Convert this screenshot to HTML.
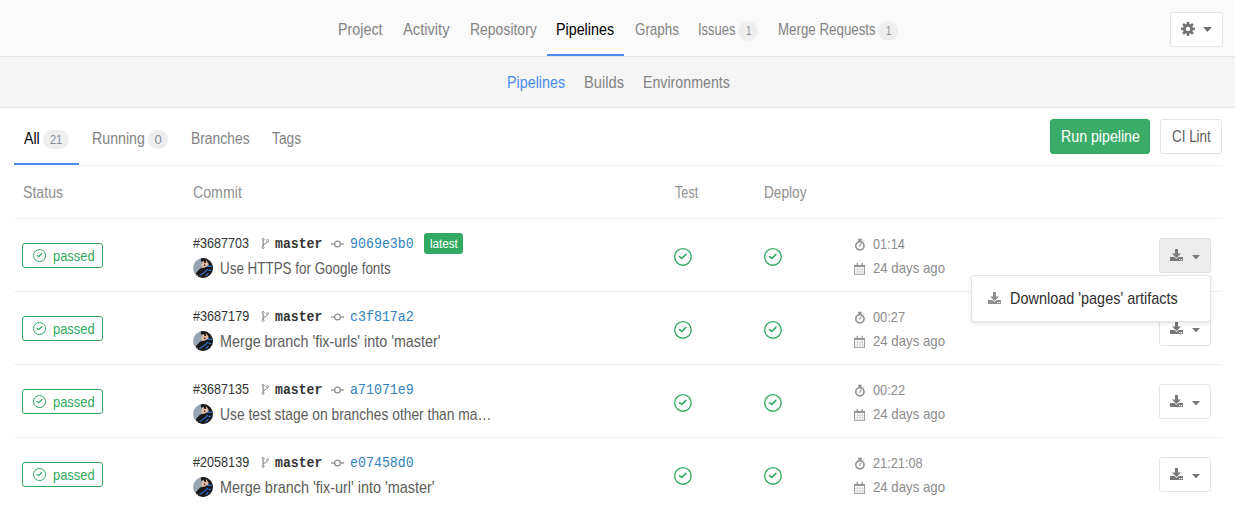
<!DOCTYPE html>
<html><head><meta charset="utf-8"><title>Pipelines</title>
<style>
html,body{margin:0;padding:0;background:#fff;}
body{width:1235px;height:509px;overflow:hidden;position:relative;font-family:"Liberation Sans",sans-serif;}
</style></head><body>
<div style="position:absolute;left:0px;top:0px;width:1235px;height:56px;background:#fafafa"></div>
<div style="position:absolute;left:0px;top:56px;width:1235px;height:1px;background:#e5e5e5"></div>
<div style="position:absolute;left:547px;top:54px;width:77px;height:2px;background:#4a8bee"></div>
<div style="position:absolute;left:738px;top:21px;width:20px;height:20px;background:#eeeeee;border-radius:10px"></div>
<div style="position:absolute;left:878px;top:21px;width:20px;height:20px;background:#eeeeee;border-radius:10px"></div>
<div style="position:absolute;left:1170px;top:12px;width:53px;height:35px;background:#fff;border:1px solid #e5e5e5;border-radius:3px;box-sizing:border-box"></div>
<div style="position:absolute;left:0px;top:57px;width:1235px;height:50px;background:#f5f5f5"></div>
<div style="position:absolute;left:0px;top:107px;width:1235px;height:1px;background:#e5e5e5"></div>
<div style="position:absolute;left:43px;top:130px;width:26px;height:19px;background:#eeeeee;border-radius:10px"></div>
<div style="position:absolute;left:148px;top:130px;width:20px;height:19px;background:#eeeeee;border-radius:10px"></div>
<div style="position:absolute;left:14px;top:163px;width:65px;height:2px;background:#4a8bee"></div>
<div style="position:absolute;left:79px;top:165px;width:1143px;height:1px;background:#f0f0f0"></div>
<div style="position:absolute;left:1050px;top:119px;width:100px;height:35px;background:#3bac68;border:1px solid #2faa60;border-radius:3px;box-sizing:border-box"></div>
<div style="position:absolute;left:1160px;top:119px;width:62px;height:35px;background:#fff;border:1px solid #e5e5e5;border-radius:3px;box-sizing:border-box"></div>
<div style="position:absolute;left:14px;top:218px;width:1208px;height:1px;background:#f0f0f0"></div>
<div style="position:absolute;left:22px;top:243px;width:81px;height:25px;border:1px solid #2faa60;border-radius:3px;box-sizing:border-box;background:#fff"></div>
<svg style="position:absolute;left:30.95px;top:246.85px" width="17.1" height="17.1" viewBox="-8.55 -8.55 17.1 17.1"><circle cx="0" cy="0" r="6.05" fill="none" stroke="#2faa60" stroke-width="1.0"/><path d="M-2.49 -0.13 L-0.79 1.05 L2.16 -1.83" fill="none" stroke="#2faa60" stroke-width="1.25" stroke-linecap="round" stroke-linejoin="round"/></svg>
<svg style="position:absolute;left:256px;top:234px" width="16" height="18" viewBox="256 234 16 18"><g fill="none" stroke="#858585" stroke-width="0.9"><circle cx="263.1" cy="239.4" r="1.05"/><circle cx="263.1" cy="247.4" r="1.05"/><circle cx="267.5" cy="240.6" r="1.05"/><path d="M263.1 240.4 V246.4" stroke-width="1.15"/><path d="M267.5 241.6 Q267.3 243.6 263.3 244.6" stroke-width="1"/></g></svg>
<svg style="position:absolute;left:330px;top:239px" width="15" height="10" viewBox="0 0 15 10"><path d="M1 5 H14" stroke="#8f8f8f" stroke-width="1.3"/><circle cx="7.5" cy="5" r="2.9" fill="#fff" stroke="#8f8f8f" stroke-width="1.3"/></svg>
<div style="position:absolute;left:424px;top:233px;width:39px;height:21px;background:#33aa62;border-radius:3px"></div>
<svg style="position:absolute;left:193px;top:257.9px" width="20" height="20" viewBox="0 0 20 20"><defs><clipPath id="av0"><circle cx="10" cy="10" r="9.95"/></clipPath></defs><g clip-path="url(#av0)"><rect width="20" height="20" fill="#97a4b2"/><path d="M7.6 0 L20 0 L20 9 L16 8 L14 4 L10 3 L8.2 4 Z" fill="#1d1a19"/><path d="M9.4 4 L13.5 2.6 L15.6 6 L14.6 9.2 L10 10.2 L8.2 8 Z" fill="#e3bca2"/><path d="M10.8 3 L12.6 2.4 L13.4 4.6 L11.6 5.2 Z" fill="#1d1a19"/><circle cx="11.6" cy="7.2" r="0.8" fill="#1d1a19"/><path d="M3 15 L7.2 10.6 L12 9.6 L15.6 7.6 L20 7.6 L20 20 L3 20 Z" fill="#1b1818"/><path d="M6.8 17.4 L11.4 14.4 L14.6 11.4 M14.2 8.4 L18.8 8.2 M13 17.6 L15.2 15.4 M16 12.4 L17.6 12.2" fill="none" stroke="#2f7ee6" stroke-width="1.1" stroke-linecap="round"/><path d="M3.2 16.4 L4.6 17.8" stroke="#e8b9a0" stroke-width="1"/></g></svg>
<svg style="position:absolute;left:671.8px;top:245.55px" width="21.9" height="21.9" viewBox="-10.95 -10.95 21.9 21.9"><circle cx="0" cy="0" r="8.274999999999999" fill="none" stroke="#2faa60" stroke-width="1.35"/><path d="M-3.40 -0.18 L-1.07 1.43 L2.95 -2.51" fill="none" stroke="#2faa60" stroke-width="1.6" stroke-linecap="round" stroke-linejoin="round"/></svg>
<svg style="position:absolute;left:761.8px;top:245.55px" width="21.9" height="21.9" viewBox="-10.95 -10.95 21.9 21.9"><circle cx="0" cy="0" r="8.274999999999999" fill="none" stroke="#2faa60" stroke-width="1.35"/><path d="M-3.40 -0.18 L-1.07 1.43 L2.95 -2.51" fill="none" stroke="#2faa60" stroke-width="1.6" stroke-linecap="round" stroke-linejoin="round"/></svg>
<svg style="position:absolute;left:850px;top:235px" width="20" height="20" viewBox="850 235 20 20"><path d="M858 238.7 H861.9 L861.3 241.2 H858.6 Z" fill="#8f8f8f"/><circle cx="859.9" cy="245.8" r="4.1" fill="none" stroke="#8f8f8f" stroke-width="1.6"/><path d="M859.6 246.3 L861.2 243.8" stroke="#8f8f8f" stroke-width="1.1" stroke-linecap="round"/><path d="M862.9 241.5 L863.9 240.5" stroke="#8f8f8f" stroke-width="0.9"/></svg>
<svg style="position:absolute;left:850px;top:260px" width="20" height="20" viewBox="850 260 20 20"><rect x="854.4" y="265.4" width="10.2" height="8.9" fill="none" stroke="#8f8f8f" stroke-width="0.85"/><rect x="854.2" y="265" width="10.6" height="1.9" fill="#8f8f8f"/><path d="M857.3 267 V274.3 M859.9 267 V274.3 M862.4 267 V274.3 M854.5 269.3 H864.5 M854.5 271.8 H864.5" stroke="#8f8f8f" stroke-width="0.5" opacity="0.6"/><rect x="856.6" y="262.8" width="1.4" height="2.6" fill="#8f8f8f" opacity="0.85"/><rect x="861.5" y="262.8" width="1.4" height="2.6" fill="#8f8f8f" opacity="0.85"/></svg>
<div style="position:absolute;left:1159px;top:238px;width:52px;height:35px;background:#ececec;border:1px solid #dcdfe3;border-radius:3px;box-sizing:border-box"></div>
<svg style="position:absolute;left:1170px;top:249px" width="13" height="12" viewBox="0 0 13 12"><rect x="5" y="0" width="3" height="6" fill="#787878"/><path d="M2 4.5 L11 4.5 L6.5 9 Z" fill="#787878"/><path d="M0 8 L4.5 8 L6.5 10 L8.5 8 L13 8 L13 12 L0 12 Z" fill="#787878"/><rect x="9" y="10" width="1.2" height="1.2" fill="#fff"/><rect x="11" y="10" width="1.2" height="1.2" fill="#fff"/></svg>
<svg style="position:absolute;left:1192.0px;top:254.75px" width="8" height="4.5" viewBox="0 0 8 4.5"><path d="M0 0 L8 0 L4.0 4.5 Z" fill="#787878"/></svg>
<div style="position:absolute;left:14px;top:291px;width:1208px;height:1px;background:#f0f0f0"></div>
<div style="position:absolute;left:22px;top:316px;width:81px;height:25px;border:1px solid #2faa60;border-radius:3px;box-sizing:border-box;background:#fff"></div>
<svg style="position:absolute;left:30.95px;top:319.84999999999997px" width="17.1" height="17.1" viewBox="-8.55 -8.55 17.1 17.1"><circle cx="0" cy="0" r="6.05" fill="none" stroke="#2faa60" stroke-width="1.0"/><path d="M-2.49 -0.13 L-0.79 1.05 L2.16 -1.83" fill="none" stroke="#2faa60" stroke-width="1.25" stroke-linecap="round" stroke-linejoin="round"/></svg>
<svg style="position:absolute;left:256px;top:307px" width="16" height="18" viewBox="256 234 16 18"><g fill="none" stroke="#858585" stroke-width="0.9"><circle cx="263.1" cy="239.4" r="1.05"/><circle cx="263.1" cy="247.4" r="1.05"/><circle cx="267.5" cy="240.6" r="1.05"/><path d="M263.1 240.4 V246.4" stroke-width="1.15"/><path d="M267.5 241.6 Q267.3 243.6 263.3 244.6" stroke-width="1"/></g></svg>
<svg style="position:absolute;left:330px;top:312px" width="15" height="10" viewBox="0 0 15 10"><path d="M1 5 H14" stroke="#8f8f8f" stroke-width="1.3"/><circle cx="7.5" cy="5" r="2.9" fill="#fff" stroke="#8f8f8f" stroke-width="1.3"/></svg>
<svg style="position:absolute;left:193px;top:330.9px" width="20" height="20" viewBox="0 0 20 20"><defs><clipPath id="av1"><circle cx="10" cy="10" r="9.95"/></clipPath></defs><g clip-path="url(#av1)"><rect width="20" height="20" fill="#97a4b2"/><path d="M7.6 0 L20 0 L20 9 L16 8 L14 4 L10 3 L8.2 4 Z" fill="#1d1a19"/><path d="M9.4 4 L13.5 2.6 L15.6 6 L14.6 9.2 L10 10.2 L8.2 8 Z" fill="#e3bca2"/><path d="M10.8 3 L12.6 2.4 L13.4 4.6 L11.6 5.2 Z" fill="#1d1a19"/><circle cx="11.6" cy="7.2" r="0.8" fill="#1d1a19"/><path d="M3 15 L7.2 10.6 L12 9.6 L15.6 7.6 L20 7.6 L20 20 L3 20 Z" fill="#1b1818"/><path d="M6.8 17.4 L11.4 14.4 L14.6 11.4 M14.2 8.4 L18.8 8.2 M13 17.6 L15.2 15.4 M16 12.4 L17.6 12.2" fill="none" stroke="#2f7ee6" stroke-width="1.1" stroke-linecap="round"/><path d="M3.2 16.4 L4.6 17.8" stroke="#e8b9a0" stroke-width="1"/></g></svg>
<svg style="position:absolute;left:671.8px;top:318.55px" width="21.9" height="21.9" viewBox="-10.95 -10.95 21.9 21.9"><circle cx="0" cy="0" r="8.274999999999999" fill="none" stroke="#2faa60" stroke-width="1.35"/><path d="M-3.40 -0.18 L-1.07 1.43 L2.95 -2.51" fill="none" stroke="#2faa60" stroke-width="1.6" stroke-linecap="round" stroke-linejoin="round"/></svg>
<svg style="position:absolute;left:761.8px;top:318.55px" width="21.9" height="21.9" viewBox="-10.95 -10.95 21.9 21.9"><circle cx="0" cy="0" r="8.274999999999999" fill="none" stroke="#2faa60" stroke-width="1.35"/><path d="M-3.40 -0.18 L-1.07 1.43 L2.95 -2.51" fill="none" stroke="#2faa60" stroke-width="1.6" stroke-linecap="round" stroke-linejoin="round"/></svg>
<svg style="position:absolute;left:850px;top:308px" width="20" height="20" viewBox="850 235 20 20"><path d="M858 238.7 H861.9 L861.3 241.2 H858.6 Z" fill="#8f8f8f"/><circle cx="859.9" cy="245.8" r="4.1" fill="none" stroke="#8f8f8f" stroke-width="1.6"/><path d="M859.6 246.3 L861.2 243.8" stroke="#8f8f8f" stroke-width="1.1" stroke-linecap="round"/><path d="M862.9 241.5 L863.9 240.5" stroke="#8f8f8f" stroke-width="0.9"/></svg>
<svg style="position:absolute;left:850px;top:333px" width="20" height="20" viewBox="850 260 20 20"><rect x="854.4" y="265.4" width="10.2" height="8.9" fill="none" stroke="#8f8f8f" stroke-width="0.85"/><rect x="854.2" y="265" width="10.6" height="1.9" fill="#8f8f8f"/><path d="M857.3 267 V274.3 M859.9 267 V274.3 M862.4 267 V274.3 M854.5 269.3 H864.5 M854.5 271.8 H864.5" stroke="#8f8f8f" stroke-width="0.5" opacity="0.6"/><rect x="856.6" y="262.8" width="1.4" height="2.6" fill="#8f8f8f" opacity="0.85"/><rect x="861.5" y="262.8" width="1.4" height="2.6" fill="#8f8f8f" opacity="0.85"/></svg>
<div style="position:absolute;left:1159px;top:311px;width:52px;height:35px;background:#fff;border:1px solid #e5e5e5;border-radius:3px;box-sizing:border-box"></div>
<svg style="position:absolute;left:1170px;top:322px" width="13" height="12" viewBox="0 0 13 12"><rect x="5" y="0" width="3" height="6" fill="#787878"/><path d="M2 4.5 L11 4.5 L6.5 9 Z" fill="#787878"/><path d="M0 8 L4.5 8 L6.5 10 L8.5 8 L13 8 L13 12 L0 12 Z" fill="#787878"/><rect x="9" y="10" width="1.2" height="1.2" fill="#fff"/><rect x="11" y="10" width="1.2" height="1.2" fill="#fff"/></svg>
<svg style="position:absolute;left:1192.0px;top:327.75px" width="8" height="4.5" viewBox="0 0 8 4.5"><path d="M0 0 L8 0 L4.0 4.5 Z" fill="#787878"/></svg>
<div style="position:absolute;left:14px;top:364px;width:1208px;height:1px;background:#f0f0f0"></div>
<div style="position:absolute;left:22px;top:389px;width:81px;height:25px;border:1px solid #2faa60;border-radius:3px;box-sizing:border-box;background:#fff"></div>
<svg style="position:absolute;left:30.95px;top:392.84999999999997px" width="17.1" height="17.1" viewBox="-8.55 -8.55 17.1 17.1"><circle cx="0" cy="0" r="6.05" fill="none" stroke="#2faa60" stroke-width="1.0"/><path d="M-2.49 -0.13 L-0.79 1.05 L2.16 -1.83" fill="none" stroke="#2faa60" stroke-width="1.25" stroke-linecap="round" stroke-linejoin="round"/></svg>
<svg style="position:absolute;left:256px;top:380px" width="16" height="18" viewBox="256 234 16 18"><g fill="none" stroke="#858585" stroke-width="0.9"><circle cx="263.1" cy="239.4" r="1.05"/><circle cx="263.1" cy="247.4" r="1.05"/><circle cx="267.5" cy="240.6" r="1.05"/><path d="M263.1 240.4 V246.4" stroke-width="1.15"/><path d="M267.5 241.6 Q267.3 243.6 263.3 244.6" stroke-width="1"/></g></svg>
<svg style="position:absolute;left:330px;top:385px" width="15" height="10" viewBox="0 0 15 10"><path d="M1 5 H14" stroke="#8f8f8f" stroke-width="1.3"/><circle cx="7.5" cy="5" r="2.9" fill="#fff" stroke="#8f8f8f" stroke-width="1.3"/></svg>
<svg style="position:absolute;left:193px;top:403.9px" width="20" height="20" viewBox="0 0 20 20"><defs><clipPath id="av2"><circle cx="10" cy="10" r="9.95"/></clipPath></defs><g clip-path="url(#av2)"><rect width="20" height="20" fill="#97a4b2"/><path d="M7.6 0 L20 0 L20 9 L16 8 L14 4 L10 3 L8.2 4 Z" fill="#1d1a19"/><path d="M9.4 4 L13.5 2.6 L15.6 6 L14.6 9.2 L10 10.2 L8.2 8 Z" fill="#e3bca2"/><path d="M10.8 3 L12.6 2.4 L13.4 4.6 L11.6 5.2 Z" fill="#1d1a19"/><circle cx="11.6" cy="7.2" r="0.8" fill="#1d1a19"/><path d="M3 15 L7.2 10.6 L12 9.6 L15.6 7.6 L20 7.6 L20 20 L3 20 Z" fill="#1b1818"/><path d="M6.8 17.4 L11.4 14.4 L14.6 11.4 M14.2 8.4 L18.8 8.2 M13 17.6 L15.2 15.4 M16 12.4 L17.6 12.2" fill="none" stroke="#2f7ee6" stroke-width="1.1" stroke-linecap="round"/><path d="M3.2 16.4 L4.6 17.8" stroke="#e8b9a0" stroke-width="1"/></g></svg>
<svg style="position:absolute;left:671.8px;top:391.55px" width="21.9" height="21.9" viewBox="-10.95 -10.95 21.9 21.9"><circle cx="0" cy="0" r="8.274999999999999" fill="none" stroke="#2faa60" stroke-width="1.35"/><path d="M-3.40 -0.18 L-1.07 1.43 L2.95 -2.51" fill="none" stroke="#2faa60" stroke-width="1.6" stroke-linecap="round" stroke-linejoin="round"/></svg>
<svg style="position:absolute;left:761.8px;top:391.55px" width="21.9" height="21.9" viewBox="-10.95 -10.95 21.9 21.9"><circle cx="0" cy="0" r="8.274999999999999" fill="none" stroke="#2faa60" stroke-width="1.35"/><path d="M-3.40 -0.18 L-1.07 1.43 L2.95 -2.51" fill="none" stroke="#2faa60" stroke-width="1.6" stroke-linecap="round" stroke-linejoin="round"/></svg>
<svg style="position:absolute;left:850px;top:381px" width="20" height="20" viewBox="850 235 20 20"><path d="M858 238.7 H861.9 L861.3 241.2 H858.6 Z" fill="#8f8f8f"/><circle cx="859.9" cy="245.8" r="4.1" fill="none" stroke="#8f8f8f" stroke-width="1.6"/><path d="M859.6 246.3 L861.2 243.8" stroke="#8f8f8f" stroke-width="1.1" stroke-linecap="round"/><path d="M862.9 241.5 L863.9 240.5" stroke="#8f8f8f" stroke-width="0.9"/></svg>
<svg style="position:absolute;left:850px;top:406px" width="20" height="20" viewBox="850 260 20 20"><rect x="854.4" y="265.4" width="10.2" height="8.9" fill="none" stroke="#8f8f8f" stroke-width="0.85"/><rect x="854.2" y="265" width="10.6" height="1.9" fill="#8f8f8f"/><path d="M857.3 267 V274.3 M859.9 267 V274.3 M862.4 267 V274.3 M854.5 269.3 H864.5 M854.5 271.8 H864.5" stroke="#8f8f8f" stroke-width="0.5" opacity="0.6"/><rect x="856.6" y="262.8" width="1.4" height="2.6" fill="#8f8f8f" opacity="0.85"/><rect x="861.5" y="262.8" width="1.4" height="2.6" fill="#8f8f8f" opacity="0.85"/></svg>
<div style="position:absolute;left:1159px;top:384px;width:52px;height:35px;background:#fff;border:1px solid #e5e5e5;border-radius:3px;box-sizing:border-box"></div>
<svg style="position:absolute;left:1170px;top:395px" width="13" height="12" viewBox="0 0 13 12"><rect x="5" y="0" width="3" height="6" fill="#787878"/><path d="M2 4.5 L11 4.5 L6.5 9 Z" fill="#787878"/><path d="M0 8 L4.5 8 L6.5 10 L8.5 8 L13 8 L13 12 L0 12 Z" fill="#787878"/><rect x="9" y="10" width="1.2" height="1.2" fill="#fff"/><rect x="11" y="10" width="1.2" height="1.2" fill="#fff"/></svg>
<svg style="position:absolute;left:1192.0px;top:400.75px" width="8" height="4.5" viewBox="0 0 8 4.5"><path d="M0 0 L8 0 L4.0 4.5 Z" fill="#787878"/></svg>
<div style="position:absolute;left:14px;top:437px;width:1208px;height:1px;background:#f0f0f0"></div>
<div style="position:absolute;left:22px;top:462px;width:81px;height:25px;border:1px solid #2faa60;border-radius:3px;box-sizing:border-box;background:#fff"></div>
<svg style="position:absolute;left:30.95px;top:465.84999999999997px" width="17.1" height="17.1" viewBox="-8.55 -8.55 17.1 17.1"><circle cx="0" cy="0" r="6.05" fill="none" stroke="#2faa60" stroke-width="1.0"/><path d="M-2.49 -0.13 L-0.79 1.05 L2.16 -1.83" fill="none" stroke="#2faa60" stroke-width="1.25" stroke-linecap="round" stroke-linejoin="round"/></svg>
<svg style="position:absolute;left:256px;top:453px" width="16" height="18" viewBox="256 234 16 18"><g fill="none" stroke="#858585" stroke-width="0.9"><circle cx="263.1" cy="239.4" r="1.05"/><circle cx="263.1" cy="247.4" r="1.05"/><circle cx="267.5" cy="240.6" r="1.05"/><path d="M263.1 240.4 V246.4" stroke-width="1.15"/><path d="M267.5 241.6 Q267.3 243.6 263.3 244.6" stroke-width="1"/></g></svg>
<svg style="position:absolute;left:330px;top:458px" width="15" height="10" viewBox="0 0 15 10"><path d="M1 5 H14" stroke="#8f8f8f" stroke-width="1.3"/><circle cx="7.5" cy="5" r="2.9" fill="#fff" stroke="#8f8f8f" stroke-width="1.3"/></svg>
<svg style="position:absolute;left:193px;top:476.9px" width="20" height="20" viewBox="0 0 20 20"><defs><clipPath id="av3"><circle cx="10" cy="10" r="9.95"/></clipPath></defs><g clip-path="url(#av3)"><rect width="20" height="20" fill="#97a4b2"/><path d="M7.6 0 L20 0 L20 9 L16 8 L14 4 L10 3 L8.2 4 Z" fill="#1d1a19"/><path d="M9.4 4 L13.5 2.6 L15.6 6 L14.6 9.2 L10 10.2 L8.2 8 Z" fill="#e3bca2"/><path d="M10.8 3 L12.6 2.4 L13.4 4.6 L11.6 5.2 Z" fill="#1d1a19"/><circle cx="11.6" cy="7.2" r="0.8" fill="#1d1a19"/><path d="M3 15 L7.2 10.6 L12 9.6 L15.6 7.6 L20 7.6 L20 20 L3 20 Z" fill="#1b1818"/><path d="M6.8 17.4 L11.4 14.4 L14.6 11.4 M14.2 8.4 L18.8 8.2 M13 17.6 L15.2 15.4 M16 12.4 L17.6 12.2" fill="none" stroke="#2f7ee6" stroke-width="1.1" stroke-linecap="round"/><path d="M3.2 16.4 L4.6 17.8" stroke="#e8b9a0" stroke-width="1"/></g></svg>
<svg style="position:absolute;left:671.8px;top:464.55px" width="21.9" height="21.9" viewBox="-10.95 -10.95 21.9 21.9"><circle cx="0" cy="0" r="8.274999999999999" fill="none" stroke="#2faa60" stroke-width="1.35"/><path d="M-3.40 -0.18 L-1.07 1.43 L2.95 -2.51" fill="none" stroke="#2faa60" stroke-width="1.6" stroke-linecap="round" stroke-linejoin="round"/></svg>
<svg style="position:absolute;left:761.8px;top:464.55px" width="21.9" height="21.9" viewBox="-10.95 -10.95 21.9 21.9"><circle cx="0" cy="0" r="8.274999999999999" fill="none" stroke="#2faa60" stroke-width="1.35"/><path d="M-3.40 -0.18 L-1.07 1.43 L2.95 -2.51" fill="none" stroke="#2faa60" stroke-width="1.6" stroke-linecap="round" stroke-linejoin="round"/></svg>
<svg style="position:absolute;left:850px;top:454px" width="20" height="20" viewBox="850 235 20 20"><path d="M858 238.7 H861.9 L861.3 241.2 H858.6 Z" fill="#8f8f8f"/><circle cx="859.9" cy="245.8" r="4.1" fill="none" stroke="#8f8f8f" stroke-width="1.6"/><path d="M859.6 246.3 L861.2 243.8" stroke="#8f8f8f" stroke-width="1.1" stroke-linecap="round"/><path d="M862.9 241.5 L863.9 240.5" stroke="#8f8f8f" stroke-width="0.9"/></svg>
<svg style="position:absolute;left:850px;top:479px" width="20" height="20" viewBox="850 260 20 20"><rect x="854.4" y="265.4" width="10.2" height="8.9" fill="none" stroke="#8f8f8f" stroke-width="0.85"/><rect x="854.2" y="265" width="10.6" height="1.9" fill="#8f8f8f"/><path d="M857.3 267 V274.3 M859.9 267 V274.3 M862.4 267 V274.3 M854.5 269.3 H864.5 M854.5 271.8 H864.5" stroke="#8f8f8f" stroke-width="0.5" opacity="0.6"/><rect x="856.6" y="262.8" width="1.4" height="2.6" fill="#8f8f8f" opacity="0.85"/><rect x="861.5" y="262.8" width="1.4" height="2.6" fill="#8f8f8f" opacity="0.85"/></svg>
<div style="position:absolute;left:1159px;top:457px;width:52px;height:35px;background:#fff;border:1px solid #e5e5e5;border-radius:3px;box-sizing:border-box"></div>
<svg style="position:absolute;left:1170px;top:468px" width="13" height="12" viewBox="0 0 13 12"><rect x="5" y="0" width="3" height="6" fill="#787878"/><path d="M2 4.5 L11 4.5 L6.5 9 Z" fill="#787878"/><path d="M0 8 L4.5 8 L6.5 10 L8.5 8 L13 8 L13 12 L0 12 Z" fill="#787878"/><rect x="9" y="10" width="1.2" height="1.2" fill="#fff"/><rect x="11" y="10" width="1.2" height="1.2" fill="#fff"/></svg>
<svg style="position:absolute;left:1192.0px;top:473.75px" width="8" height="4.5" viewBox="0 0 8 4.5"><path d="M0 0 L8 0 L4.0 4.5 Z" fill="#787878"/></svg>
<svg style="position:absolute;left:1178px;top:19px" width="20" height="20" viewBox="-10 -9.9 20 20"><g fill="#747474"><rect x="-1.3" y="-7" width="2.6" height="3.2" transform="rotate(0)"/><rect x="-1.3" y="-7" width="2.6" height="3.2" transform="rotate(45)"/><rect x="-1.3" y="-7" width="2.6" height="3.2" transform="rotate(90)"/><rect x="-1.3" y="-7" width="2.6" height="3.2" transform="rotate(135)"/><rect x="-1.3" y="-7" width="2.6" height="3.2" transform="rotate(180)"/><rect x="-1.3" y="-7" width="2.6" height="3.2" transform="rotate(225)"/><rect x="-1.3" y="-7" width="2.6" height="3.2" transform="rotate(270)"/><rect x="-1.3" y="-7" width="2.6" height="3.2" transform="rotate(315)"/><circle r="5.1"/></g><circle r="2.2" fill="#fff"/></svg>
<svg style="position:absolute;left:1203.0px;top:27.0px" width="9" height="5" viewBox="0 0 9 5"><path d="M0 0 L9 0 L4.5 5 Z" fill="#6f6f6f"/></svg>
<div style="position:absolute;left:971px;top:275px;width:240px;height:47px;box-sizing:border-box;background:#fff;border:1px solid #e5e5e5;border-radius:3px;box-shadow:0 2px 4px rgba(0,0,0,0.1);z-index:5"></div>
<svg style="position:absolute;z-index:6;left:988px;top:292px" width="13" height="12" viewBox="0 0 13 12"><rect x="5" y="0" width="3" height="6" fill="#8f8f8f"/><path d="M2 4.5 L11 4.5 L6.5 9 Z" fill="#8f8f8f"/><path d="M0 8 L4.5 8 L6.5 10 L8.5 8 L13 8 L13 12 L0 12 Z" fill="#8f8f8f"/><rect x="9" y="10" width="1.2" height="1.2" fill="#fff"/><rect x="11" y="10" width="1.2" height="1.2" fill="#fff"/></svg>
<span style="position:absolute;left:337.65px;top:20.00px;font-family:'Liberation Sans',sans-serif;font-weight:normal;font-size:15px;line-height:20px;transform:scale(0.9545,1.06);transform-origin:0 15px;color:#838383;white-space:pre;z-index:1">Project</span>
<span style="position:absolute;left:403.00px;top:20.00px;font-family:'Liberation Sans',sans-serif;font-weight:normal;font-size:15px;line-height:20px;transform:scale(0.9791,1.06);transform-origin:0 15px;color:#838383;white-space:pre;z-index:1">Activity</span>
<span style="position:absolute;left:469.57px;top:20.00px;font-family:'Liberation Sans',sans-serif;font-weight:normal;font-size:15px;line-height:20px;transform:scale(0.9312,1.06);transform-origin:0 15px;color:#838383;white-space:pre;z-index:1">Repository</span>
<span style="position:absolute;left:556.45px;top:20.00px;font-family:'Liberation Sans',sans-serif;font-weight:normal;font-size:15px;line-height:20px;transform:scale(0.9533,1.06);transform-origin:0 15px;color:#000;white-space:pre;z-index:1">Pipelines</span>
<span style="position:absolute;left:634.60px;top:20.00px;font-family:'Liberation Sans',sans-serif;font-weight:normal;font-size:15px;line-height:20px;transform:scale(0.8914,1.06);transform-origin:0 15px;color:#838383;white-space:pre;z-index:1">Graphs</span>
<span style="position:absolute;left:697.83px;top:20.00px;font-family:'Liberation Sans',sans-serif;font-weight:normal;font-size:15px;line-height:20px;transform:scale(0.8673,1.06);transform-origin:0 15px;color:#838383;white-space:pre;z-index:1">Issues</span>
<span style="position:absolute;left:745.70px;top:21.00px;font-family:'Liberation Sans',sans-serif;font-weight:normal;font-size:13px;line-height:20px;transform:scale(0.7429,1.0);transform-origin:0 14px;color:#8c8c8c;white-space:pre;z-index:1">1</span>
<span style="position:absolute;left:777.71px;top:20.00px;font-family:'Liberation Sans',sans-serif;font-weight:normal;font-size:15px;line-height:20px;transform:scale(0.8880,1.06);transform-origin:0 15px;color:#838383;white-space:pre;z-index:1">Merge Requests</span>
<span style="position:absolute;left:885.70px;top:21.00px;font-family:'Liberation Sans',sans-serif;font-weight:normal;font-size:13px;line-height:20px;transform:scale(0.7429,1.0);transform-origin:0 14px;color:#8c8c8c;white-space:pre;z-index:1">1</span>
<span style="position:absolute;left:506.54px;top:73.00px;font-family:'Liberation Sans',sans-serif;font-weight:normal;font-size:15px;line-height:20px;transform:scale(0.9550,1.06);transform-origin:0 15px;color:#4a8bee;white-space:pre;z-index:1">Pipelines</span>
<span style="position:absolute;left:583.52px;top:73.00px;font-family:'Liberation Sans',sans-serif;font-weight:normal;font-size:15px;line-height:20px;transform:scale(0.9783,1.06);transform-origin:0 15px;color:#838383;white-space:pre;z-index:1">Builds</span>
<span style="position:absolute;left:642.85px;top:73.00px;font-family:'Liberation Sans',sans-serif;font-weight:normal;font-size:15px;line-height:20px;transform:scale(0.9467,1.06);transform-origin:0 15px;color:#838383;white-space:pre;z-index:1">Environments</span>
<span style="position:absolute;left:23.80px;top:129.00px;font-family:'Liberation Sans',sans-serif;font-weight:normal;font-size:15px;line-height:20px;transform:scale(0.9426,1.06);transform-origin:0 15px;color:#000;white-space:pre;z-index:1">All</span>
<span style="position:absolute;left:50.00px;top:130.00px;font-family:'Liberation Sans',sans-serif;font-weight:normal;font-size:13px;line-height:20px;transform:scale(0.8433,1.0);transform-origin:0 14px;color:#7f8b9e;white-space:pre;z-index:1">21</span>
<span style="position:absolute;left:91.65px;top:129.00px;font-family:'Liberation Sans',sans-serif;font-weight:normal;font-size:15px;line-height:20px;transform:scale(0.9462,1.06);transform-origin:0 15px;color:#838383;white-space:pre;z-index:1">Running</span>
<span style="position:absolute;left:154.50px;top:130.00px;font-family:'Liberation Sans',sans-serif;font-weight:normal;font-size:13px;line-height:20px;transform:scale(1.0000,1.0);transform-origin:0 14px;color:#7f8b9e;white-space:pre;z-index:1">0</span>
<span style="position:absolute;left:190.78px;top:129.00px;font-family:'Liberation Sans',sans-serif;font-weight:normal;font-size:15px;line-height:20px;transform:scale(0.9245,1.06);transform-origin:0 15px;color:#838383;white-space:pre;z-index:1">Branches</span>
<span style="position:absolute;left:272.40px;top:129.00px;font-family:'Liberation Sans',sans-serif;font-weight:normal;font-size:15px;line-height:20px;transform:scale(0.9171,1.06);transform-origin:0 15px;color:#838383;white-space:pre;z-index:1">Tags</span>
<span style="position:absolute;left:1060.65px;top:127.00px;font-family:'Liberation Sans',sans-serif;font-weight:normal;font-size:15px;line-height:20px;transform:scale(0.9458,1.06);transform-origin:0 15px;color:#ffffff;white-space:pre;z-index:2">Run pipeline</span>
<span style="position:absolute;left:1171.50px;top:127.00px;font-family:'Liberation Sans',sans-serif;font-weight:normal;font-size:15px;line-height:20px;transform:scale(0.8940,1.06);transform-origin:0 15px;color:#5c5c5c;white-space:pre;z-index:2">CI Lint</span>
<span style="position:absolute;left:22.55px;top:183.00px;font-family:'Liberation Sans',sans-serif;font-weight:normal;font-size:15px;line-height:20px;transform:scale(0.9435,1.06);transform-origin:0 15px;color:#909090;white-space:pre;z-index:1">Status</span>
<span style="position:absolute;left:193.20px;top:183.00px;font-family:'Liberation Sans',sans-serif;font-weight:normal;font-size:15px;line-height:20px;transform:scale(0.9448,1.06);transform-origin:0 15px;color:#909090;white-space:pre;z-index:1">Commit</span>
<span style="position:absolute;left:674.90px;top:183.00px;font-family:'Liberation Sans',sans-serif;font-weight:normal;font-size:15px;line-height:20px;transform:scale(0.8468,1.06);transform-origin:0 15px;color:#909090;white-space:pre;z-index:1">Test</span>
<span style="position:absolute;left:763.59px;top:183.00px;font-family:'Liberation Sans',sans-serif;font-weight:normal;font-size:15px;line-height:20px;transform:scale(0.9114,1.06);transform-origin:0 15px;color:#909090;white-space:pre;z-index:1">Deploy</span>
<span style="position:absolute;left:52.70px;top:246.00px;font-family:'Liberation Sans',sans-serif;font-weight:normal;font-size:15px;line-height:20px;transform:scale(0.8599,1.0);transform-origin:0 15px;color:#2faa60;white-space:pre;z-index:2">passed</span>
<span style="position:absolute;left:193.10px;top:233.00px;font-family:'Liberation Sans',sans-serif;font-weight:normal;font-size:15px;line-height:20px;transform:scale(0.8374,1.0);transform-origin:0 15px;color:#333333;white-space:pre;z-index:1">#3687703</span>
<span style="position:absolute;left:275.20px;top:234.00px;font-family:'Liberation Mono',sans-serif;font-weight:bold;font-size:14px;line-height:20px;transform:scale(0.9399,1.0);transform-origin:0 14px;color:#333333;white-space:pre;z-index:1">master</span>
<span style="position:absolute;left:349.50px;top:234.00px;font-family:'Liberation Mono',sans-serif;font-weight:normal;font-size:14px;line-height:20px;transform:scale(0.9490,1.0);transform-origin:0 14px;color:#3084bb;white-space:pre;z-index:1">9069e3b0</span>
<span style="position:absolute;left:429.70px;top:234.00px;font-family:'Liberation Sans',sans-serif;font-weight:normal;font-size:13px;line-height:20px;transform:scale(0.8964,1.0);transform-origin:0 14px;color:#ffffff;white-space:pre;z-index:2">latest</span>
<span style="position:absolute;left:219.71px;top:259.00px;font-family:'Liberation Sans',sans-serif;font-weight:normal;font-size:15px;line-height:20px;transform:scale(0.8944,1.06);transform-origin:0 15px;color:#5c5c5c;white-space:pre;z-index:1">Use HTTPS for Google fonts</span>
<span style="position:absolute;left:873.30px;top:234.00px;font-family:'Liberation Sans',sans-serif;font-weight:normal;font-size:15px;line-height:20px;transform:scale(0.8469,1.0);transform-origin:0 15px;color:#8c8c8c;white-space:pre;z-index:1">01:14</span>
<span style="position:absolute;left:872.60px;top:258.00px;font-family:'Liberation Sans',sans-serif;font-weight:normal;font-size:15px;line-height:20px;transform:scale(0.8810,1.0);transform-origin:0 15px;color:#8c8c8c;white-space:pre;z-index:1">24 days ago</span>
<span style="position:absolute;left:52.70px;top:319.00px;font-family:'Liberation Sans',sans-serif;font-weight:normal;font-size:15px;line-height:20px;transform:scale(0.8599,1.0);transform-origin:0 15px;color:#2faa60;white-space:pre;z-index:2">passed</span>
<span style="position:absolute;left:193.10px;top:306.00px;font-family:'Liberation Sans',sans-serif;font-weight:normal;font-size:15px;line-height:20px;transform:scale(0.8419,1.0);transform-origin:0 15px;color:#333333;white-space:pre;z-index:1">#3687179</span>
<span style="position:absolute;left:275.20px;top:307.00px;font-family:'Liberation Mono',sans-serif;font-weight:bold;font-size:14px;line-height:20px;transform:scale(0.9399,1.0);transform-origin:0 14px;color:#333333;white-space:pre;z-index:1">master</span>
<span style="position:absolute;left:349.50px;top:307.00px;font-family:'Liberation Mono',sans-serif;font-weight:normal;font-size:14px;line-height:20px;transform:scale(0.9490,1.0);transform-origin:0 14px;color:#3084bb;white-space:pre;z-index:1">c3f817a2</span>
<span style="position:absolute;left:219.64px;top:332.00px;font-family:'Liberation Sans',sans-serif;font-weight:normal;font-size:15px;line-height:20px;transform:scale(0.9555,1.06);transform-origin:0 15px;color:#5c5c5c;white-space:pre;z-index:1">Merge branch 'fix-urls' into 'master'</span>
<span style="position:absolute;left:873.30px;top:307.00px;font-family:'Liberation Sans',sans-serif;font-weight:normal;font-size:15px;line-height:20px;transform:scale(0.8523,1.0);transform-origin:0 15px;color:#8c8c8c;white-space:pre;z-index:1">00:27</span>
<span style="position:absolute;left:872.60px;top:331.00px;font-family:'Liberation Sans',sans-serif;font-weight:normal;font-size:15px;line-height:20px;transform:scale(0.8810,1.0);transform-origin:0 15px;color:#8c8c8c;white-space:pre;z-index:1">24 days ago</span>
<span style="position:absolute;left:52.70px;top:392.00px;font-family:'Liberation Sans',sans-serif;font-weight:normal;font-size:15px;line-height:20px;transform:scale(0.8599,1.0);transform-origin:0 15px;color:#2faa60;white-space:pre;z-index:2">passed</span>
<span style="position:absolute;left:193.10px;top:379.00px;font-family:'Liberation Sans',sans-serif;font-weight:normal;font-size:15px;line-height:20px;transform:scale(0.8374,1.0);transform-origin:0 15px;color:#333333;white-space:pre;z-index:1">#3687135</span>
<span style="position:absolute;left:275.20px;top:380.00px;font-family:'Liberation Mono',sans-serif;font-weight:bold;font-size:14px;line-height:20px;transform:scale(0.9399,1.0);transform-origin:0 14px;color:#333333;white-space:pre;z-index:1">master</span>
<span style="position:absolute;left:349.50px;top:380.00px;font-family:'Liberation Mono',sans-serif;font-weight:normal;font-size:14px;line-height:20px;transform:scale(0.9490,1.0);transform-origin:0 14px;color:#3084bb;white-space:pre;z-index:1">a71071e9</span>
<span style="position:absolute;left:219.68px;top:405.00px;font-family:'Liberation Sans',sans-serif;font-weight:normal;font-size:15px;line-height:20px;transform:scale(0.9220,1.06);transform-origin:0 15px;color:#5c5c5c;white-space:pre;z-index:1">Use test stage on branches other than ma…</span>
<span style="position:absolute;left:873.30px;top:380.00px;font-family:'Liberation Sans',sans-serif;font-weight:normal;font-size:15px;line-height:20px;transform:scale(0.8523,1.0);transform-origin:0 15px;color:#8c8c8c;white-space:pre;z-index:1">00:22</span>
<span style="position:absolute;left:872.60px;top:404.00px;font-family:'Liberation Sans',sans-serif;font-weight:normal;font-size:15px;line-height:20px;transform:scale(0.8810,1.0);transform-origin:0 15px;color:#8c8c8c;white-space:pre;z-index:1">24 days ago</span>
<span style="position:absolute;left:52.70px;top:465.00px;font-family:'Liberation Sans',sans-serif;font-weight:normal;font-size:15px;line-height:20px;transform:scale(0.8599,1.0);transform-origin:0 15px;color:#2faa60;white-space:pre;z-index:2">passed</span>
<span style="position:absolute;left:193.10px;top:452.00px;font-family:'Liberation Sans',sans-serif;font-weight:normal;font-size:15px;line-height:20px;transform:scale(0.8419,1.0);transform-origin:0 15px;color:#333333;white-space:pre;z-index:1">#2058139</span>
<span style="position:absolute;left:275.20px;top:453.00px;font-family:'Liberation Mono',sans-serif;font-weight:bold;font-size:14px;line-height:20px;transform:scale(0.9399,1.0);transform-origin:0 14px;color:#333333;white-space:pre;z-index:1">master</span>
<span style="position:absolute;left:349.50px;top:453.00px;font-family:'Liberation Mono',sans-serif;font-weight:normal;font-size:14px;line-height:20px;transform:scale(0.9490,1.0);transform-origin:0 14px;color:#3084bb;white-space:pre;z-index:1">e07458d0</span>
<span style="position:absolute;left:219.64px;top:478.00px;font-family:'Liberation Sans',sans-serif;font-weight:normal;font-size:15px;line-height:20px;transform:scale(0.9612,1.06);transform-origin:0 15px;color:#5c5c5c;white-space:pre;z-index:1">Merge branch 'fix-url' into 'master'</span>
<span style="position:absolute;left:873.30px;top:453.00px;font-family:'Liberation Sans',sans-serif;font-weight:normal;font-size:15px;line-height:20px;transform:scale(0.8510,1.0);transform-origin:0 15px;color:#8c8c8c;white-space:pre;z-index:1">21:21:08</span>
<span style="position:absolute;left:872.60px;top:477.00px;font-family:'Liberation Sans',sans-serif;font-weight:normal;font-size:15px;line-height:20px;transform:scale(0.8810,1.0);transform-origin:0 15px;color:#8c8c8c;white-space:pre;z-index:1">24 days ago</span>
<span style="position:absolute;left:1009.54px;top:289.00px;font-family:'Liberation Sans',sans-serif;font-weight:normal;font-size:15px;line-height:20px;transform:scale(0.9632,1.06);transform-origin:0 15px;color:#2e2e2e;white-space:pre;z-index:6">Download 'pages' artifacts</span>
</body></html>
